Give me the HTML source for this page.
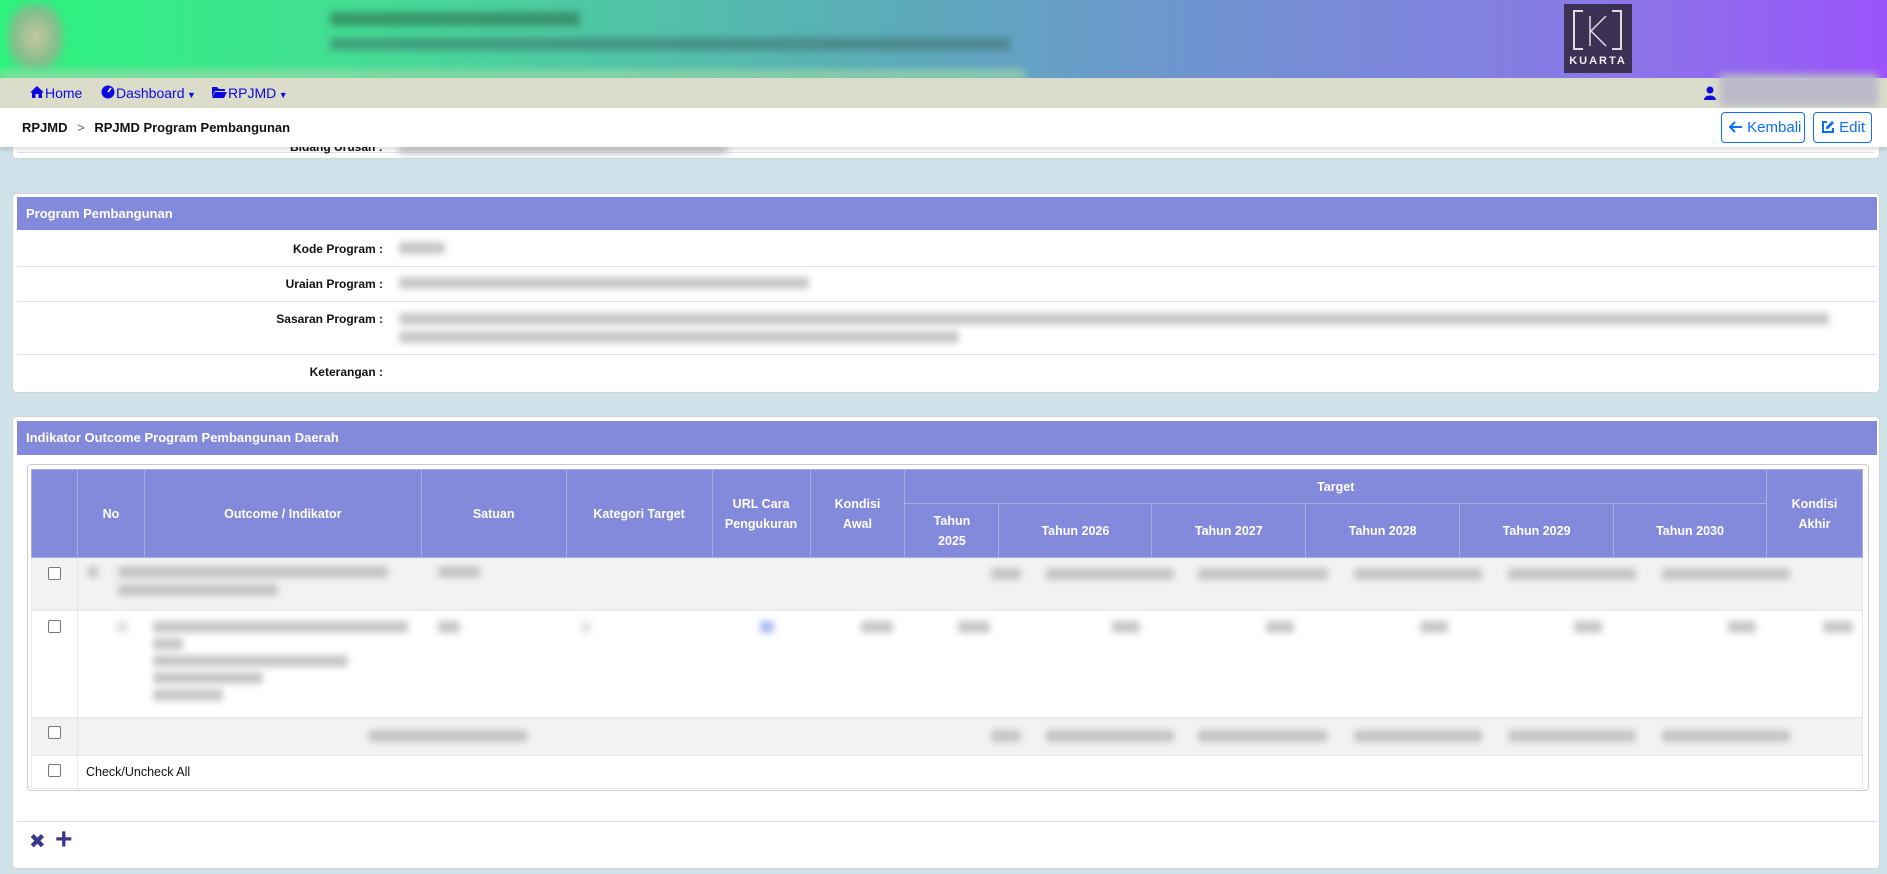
<!DOCTYPE html>
<html><head><meta charset="utf-8">
<style>
*{box-sizing:border-box;margin:0;padding:0}
body{width:1887px;height:874px;overflow:hidden;background:#d0e2e9;font-family:"Liberation Sans","DejaVu Sans",sans-serif;font-size:13px;color:#111;position:relative}
.abs{position:absolute}
.banner{left:0;top:0;width:1887px;height:78px;background:linear-gradient(90deg,#2cf57e 0%,#44df93 18%,#5aafb6 45%,#7192d2 65%,#8a78e6 85%,#9b53fb 100%)}
.blur{filter:blur(4px)}
.nav{left:0;top:78px;width:1887px;height:30px;background:#dcdccb;z-index:2}
.nav a{position:absolute;top:7px;color:#0a0ae0;font-size:14px;text-decoration:none}
.crumb{left:0;top:108px;width:1887px;height:39px;background:#fff;box-shadow:0 3px 4px rgba(0,0,0,.12);z-index:3}
.btn{position:absolute;top:4px;height:31px;border:1px solid #0d6efd;border-radius:4px;color:#0d6efd;font-size:15px;line-height:29px;padding-left:7px;white-space:nowrap}
.card{background:#fff;border-radius:5px;border:1px solid #cfd6da}
.hdr{background:#8389db;color:#fff;font-weight:bold;font-size:13px;padding-left:9px}
.row{position:absolute;left:4px;width:1860px;border-bottom:1px solid #e0e3e6}
.lab{position:absolute;right:1494px;font-weight:bold;font-size:12px;text-align:right;white-space:nowrap}
.gb{position:absolute;background:#bdbdbd;filter:blur(3.5px);height:12px;border-radius:3px;opacity:.85}
table{border-collapse:collapse;position:absolute}
th{background:#8389db;color:#fff;font-size:12.5px;font-weight:bold;border:1px solid #a8ade6;text-align:center;line-height:20px}
td{border:1px solid #e8e8e8;vertical-align:top}
.cb{display:inline-block;width:13px;height:13px;border:1px solid #777;border-radius:2px;background:#fff}
</style></head><body>

<div class="abs banner">
  <div class="abs blur" style="left:8px;top:4px;width:55px;height:66px;border-radius:40%;background:radial-gradient(#c9c9a0,#7fbc8a 60%,transparent)"></div>
  <div class="abs blur" style="left:330px;top:12px;width:250px;height:14px;background:#2c6a4c;opacity:.6"></div>
  <div class="abs blur" style="left:330px;top:38px;width:680px;height:12px;background:#3a6a66;opacity:.55"></div>
  <div class="abs blur" style="left:0;top:70px;width:1025px;height:10px;background:#9bd9a8;opacity:.8"></div>
  <div class="abs" style="left:1564px;top:4px;width:68px;height:69px;background:#3b3154">
    <div class="abs" style="left:9px;top:6px;width:2px;height:40px;background:#ddd"></div>
    <div class="abs" style="left:11px;top:6px;width:8px;height:2px;background:#ddd"></div>
    <div class="abs" style="left:11px;top:44px;width:8px;height:2px;background:#ddd"></div>
    <div class="abs" style="left:56px;top:6px;width:2px;height:40px;background:#ddd"></div>
    <div class="abs" style="left:48px;top:6px;width:8px;height:2px;background:#ddd"></div>
    <div class="abs" style="left:48px;top:44px;width:8px;height:2px;background:#ddd"></div>
    <svg class="abs" style="left:20px;top:10px" width="28" height="34"><path d="M6 2V32M22 2L7 17L22 32" stroke="#ddd" stroke-width="1.5" fill="none"/></svg>
    <div class="abs" style="left:0;top:51px;width:68px;text-align:center;color:#eee;font-size:11px;font-weight:bold;letter-spacing:2px">KUARTA</div>
  </div>
</div>

<div class="abs nav">
  <a style="left:29px"><svg width="16" height="14" style="vertical-align:-1px"><path d="M8 1L1 7.5H3V13H6.5V9H9.5V13H13V7.5H15Z" fill="#0a0ae0"/></svg>Home</a>
  <a style="left:101px"><svg width="15" height="14" style="vertical-align:-1px"><circle cx="7" cy="7" r="6.5" fill="#0a0ae0"/><path d="M7 7L10 3" stroke="#fff" stroke-width="1.6"/></svg>Dashboard<span style="font-size:9px"> ▼</span></a>
  <a style="left:211px"><svg width="17" height="14" style="vertical-align:-1px"><path d="M1 2H6L8 4H14V6H4L1 12Z M4 7H16L13 13H1Z" fill="#0a0ae0"/></svg>RPJMD<span style="font-size:9px"> ▼</span></a>
  <svg class="abs" style="left:1704px;top:8px" width="12" height="14"><circle cx="6" cy="4" r="3.5" fill="#0a0ae0"/><path d="M0 14C0 8 12 8 12 14Z" fill="#0a0ae0"/></svg>
  <div class="abs blur" style="left:1720px;top:-4px;width:158px;height:32px;background:#b9b9c9"></div>
</div>

<div class="abs crumb">
  <div class="abs" style="left:22px;top:12px;font-weight:bold;font-size:13px">RPJMD <span style="color:#666;font-weight:normal;margin:0 6px">&gt;</span> RPJMD Program Pembangunan</div>
  <div class="btn" style="left:1721px;width:84px"><svg width="14" height="12" style="vertical-align:-1px"><path d="M13 6H2M6 1L1 6L6 11" stroke="#0d6efd" stroke-width="2" fill="none"/></svg> Kembali</div>
  <div class="btn" style="left:1813px;width:59px"><svg width="14" height="14" style="vertical-align:-2px"><path d="M6 2H2V12H12V8" stroke="#0d6efd" stroke-width="2" fill="none"/><path d="M11 1L13 3L7 9H5V7Z" fill="#0d6efd"/></svg> Edit</div>
</div>

<!-- top partial card -->
<div class="abs card" style="left:12px;top:112px;width:1868px;height:47px"></div>
<div class="abs" style="left:18px;top:152px;width:1856px;height:1px;background:#e0e3e6"></div>
<div class="abs" style="left:290px;top:140px;font-weight:bold;font-size:12px">Bidang Urusan :</div>
<div class="abs gb" style="left:398px;top:146px;width:330px;height:8px"></div>

<!-- card 2 -->
<div class="abs card" style="left:12px;top:193px;width:1868px;height:200px">
  <div class="abs hdr" style="left:4px;top:3px;width:1860px;height:33px;line-height:33px">Program Pembangunan</div>
  <div class="row" style="top:36px;height:37px"><div class="lab" style="top:12px">Kode Program :</div></div>
  <div class="row" style="top:73px;height:35px"><div class="lab" style="top:10px">Uraian Program :</div></div>
  <div class="row" style="top:108px;height:53px"><div class="lab" style="top:10px">Sasaran Program :</div></div>
  <div class="row" style="top:161px;height:35px;border-bottom:none"><div class="lab" style="top:10px">Keterangan :</div></div>
  <div class="gb" style="left:386px;top:48px;width:46px"></div>
  <div class="gb" style="left:386px;top:83px;width:410px"></div>
  <div class="gb" style="left:386px;top:119px;width:1430px"></div>
  <div class="gb" style="left:386px;top:137px;width:560px"></div>
</div>

<!-- card 3 -->
<div class="abs card" style="left:12px;top:416px;width:1868px;height:453px">
  <div class="abs hdr" style="left:4px;top:4px;width:1860px;height:34px;line-height:34px">Indikator Outcome Program Pembangunan Daerah</div>
  <div class="abs" style="left:14px;top:47px;width:1842px;height:327px;border:1px solid #ccc;border-radius:4px"></div>
  <div class="abs" style="left:4px;top:404px;width:1860px;height:1px;background:#ddd"></div>
  <div class="abs" style="left:16px;top:414px;font-size:20px;font-weight:bold;color:#3a3a8a;line-height:22px">✖</div>
  <div class="abs" style="left:42px;top:409px;font-size:30px;font-weight:bold;color:#3a3a8a;line-height:28px">+</div>
</div>

<table style="left:31px;top:469px;width:1832px">
<colgroup><col style="width:46px"><col style="width:67px"><col style="width:277px"><col style="width:145px"><col style="width:146px"><col style="width:98px"><col style="width:95px"><col style="width:94px"><col style="width:153px"><col style="width:154px"><col style="width:154px"><col style="width:154px"><col style="width:153px"><col style="width:96px"></colgroup>
<tr style="height:34px"><th rowspan="2"></th><th rowspan="2">No</th><th rowspan="2">Outcome / Indikator</th><th rowspan="2">Satuan</th><th rowspan="2">Kategori Target</th><th rowspan="2">URL Cara<br>Pengukuran</th><th rowspan="2">Kondisi<br>Awal</th><th colspan="6">Target</th><th rowspan="2">Kondisi<br>Akhir</th></tr>
<tr style="height:54px"><th>Tahun<br>2025</th><th>Tahun 2026</th><th>Tahun 2027</th><th>Tahun 2028</th><th>Tahun 2029</th><th>Tahun 2030</th></tr>
<tr style="height:53px;background:#f2f2f2"><td style="text-align:center;padding-top:9px"><span class="cb"></span></td><td colspan="13" style="position:relative">
 <div class="gb" style="left:10px;top:8px;width:10px"></div><div class="gb" style="left:40px;top:8px;width:270px"></div><div class="gb" style="left:40px;top:26px;width:160px"></div><div class="gb" style="left:360px;top:8px;width:42px"></div>
 <div class="gb" style="left:913px;top:10px;width:30px"></div><div class="gb" style="left:968px;top:10px;width:128px"></div><div class="gb" style="left:1120px;top:10px;width:130px"></div><div class="gb" style="left:1276px;top:10px;width:128px"></div><div class="gb" style="left:1430px;top:10px;width:128px"></div><div class="gb" style="left:1584px;top:10px;width:128px"></div>
</td></tr>
<tr style="height:107px;background:#fff"><td style="text-align:center;padding-top:9px"><span class="cb"></span></td><td colspan="13" style="position:relative">
 <div class="gb" style="left:38px;top:10px;width:12px;background:#ddd"></div><div class="gb" style="left:75px;top:10px;width:255px"></div><div class="gb" style="left:75px;top:27px;width:30px"></div><div class="gb" style="left:75px;top:44px;width:195px"></div><div class="gb" style="left:75px;top:61px;width:110px"></div><div class="gb" style="left:75px;top:78px;width:70px"></div>
 <div class="gb" style="left:360px;top:10px;width:22px"></div><div class="gb" style="left:503px;top:10px;width:10px;background:#ddd"></div><div class="gb" style="left:682px;top:10px;width:14px;background:#9ab0f0"></div>
 <div class="gb" style="left:783px;top:10px;width:32px"></div><div class="gb" style="left:880px;top:10px;width:32px"></div><div class="gb" style="left:1034px;top:10px;width:28px"></div><div class="gb" style="left:1188px;top:10px;width:28px"></div><div class="gb" style="left:1342px;top:10px;width:28px"></div><div class="gb" style="left:1496px;top:10px;width:28px"></div><div class="gb" style="left:1650px;top:10px;width:28px"></div><div class="gb" style="left:1745px;top:10px;width:30px"></div>
</td></tr>
<tr style="height:38px;background:#f2f2f2"><td style="text-align:center;padding-top:8px"><span class="cb"></span></td><td colspan="13" style="position:relative">
 <div class="gb" style="left:290px;top:12px;width:160px"></div>
 <div class="gb" style="left:913px;top:12px;width:30px"></div><div class="gb" style="left:968px;top:12px;width:128px"></div><div class="gb" style="left:1120px;top:12px;width:130px"></div><div class="gb" style="left:1276px;top:12px;width:128px"></div><div class="gb" style="left:1430px;top:12px;width:128px"></div><div class="gb" style="left:1584px;top:12px;width:128px"></div>
</td></tr>
<tr style="height:33px;background:#fff"><td style="text-align:center;padding-top:8px"><span class="cb"></span></td><td colspan="13" style="padding:9px 0 0 8px;font-size:12.5px">Check/Uncheck All</td></tr>
</table>

</body></html>
